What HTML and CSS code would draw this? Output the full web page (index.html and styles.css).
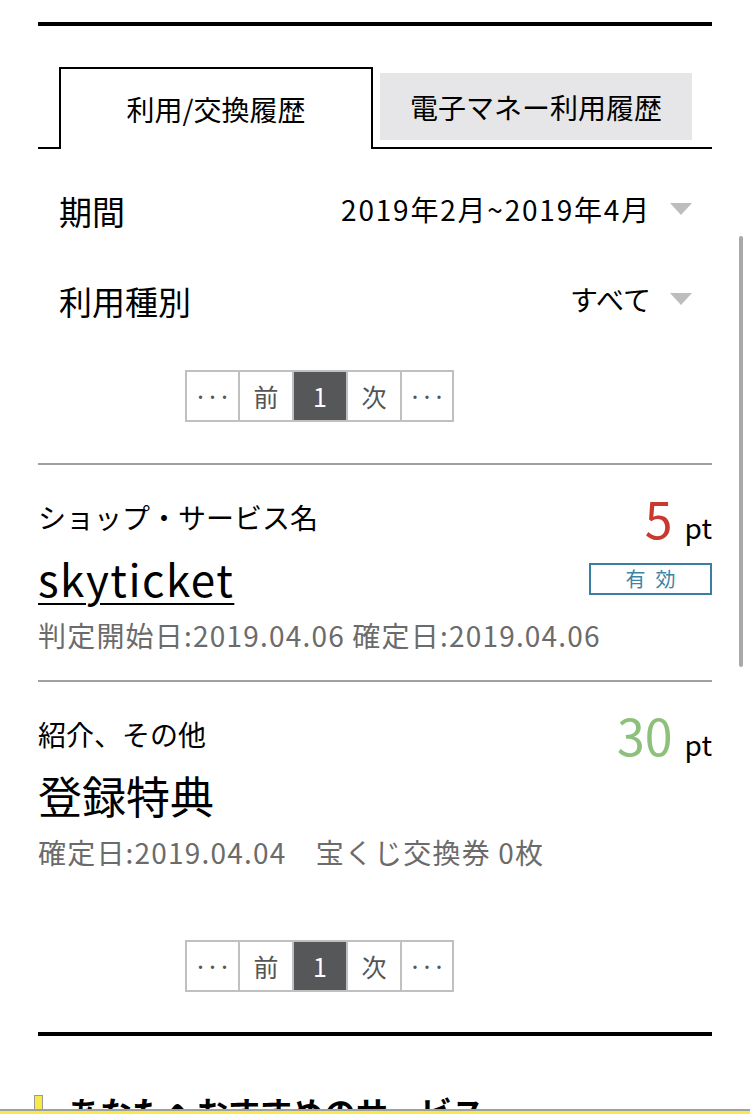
FILE: index.html
```html
<!DOCTYPE html>
<html lang="ja">
<head>
<meta charset="utf-8">
<title>利用/交換履歴</title>
<link rel="stylesheet" href="styles.css">
</head>
<body>
<div class="page">
  <div class="rule rule-top"></div>

  <div class="tabs">
    <div class="tab tab-active">利用/交換履歴</div>
    <div class="tab tab-inactive">電子マネー利用履歴</div>
  </div>

  <div class="filters">
    <div class="filter-row">
      <span class="filter-label">期間</span>
      <span class="filter-value filter-value-range">2019年2月~2019年4月<span class="caret"></span></span>
    </div>
    <div class="filter-row">
      <span class="filter-label">利用種別</span>
      <span class="filter-value">すべて<span class="caret"></span></span>
    </div>
  </div>

  <div class="pager pager-top">
    <span class="pager-cell pager-dots">···</span>
    <span class="pager-cell">前</span>
    <span class="pager-cell pager-current">1</span>
    <span class="pager-cell">次</span>
    <span class="pager-cell pager-dots">···</span>
  </div>

  <div class="history">
    <div class="item">
      <div class="item-head">
        <span class="item-label">ショップ・サービス名</span>
        <span class="points"><span class="points-num points-red">5</span><span class="points-unit">pt</span></span>
      </div>
      <div class="item-title-row">
        <a class="item-title item-link">skyticket</a>
        <span class="badge">有効</span>
      </div>
      <div class="item-date">判定開始日:2019.04.06 確定日:2019.04.06</div>
    </div>
    <div class="item item-last">
      <div class="item-head">
        <span class="item-label">紹介、その他</span>
        <span class="points"><span class="points-num points-green">30</span><span class="points-unit">pt</span></span>
      </div>
      <div class="item-title-row">
        <span class="item-title">登録特典</span>
      </div>
      <div class="item-date">確定日:2019.04.04　宝くじ交換券 0枚</div>
    </div>
  </div>

  <div class="pager pager-bottom">
    <span class="pager-cell pager-dots">···</span>
    <span class="pager-cell">前</span>
    <span class="pager-cell pager-current">1</span>
    <span class="pager-cell">次</span>
    <span class="pager-cell pager-dots">···</span>
  </div>

  <div class="rule rule-bottom"></div>

  <h2 class="section-heading"><span class="section-marker"></span><span>あなたへおすすめのサービス</span></h2>
</div>
<div class="scroll-indicator"></div>
<div class="bottom-bar"></div>
</body>
</html>
```

FILE: styles.css
```css
html {
  overflow: hidden;
}

body {
  margin: 0;
  background: #fff;
  color: #000;
  font-family: "Noto Sans CJK JP", "Noto Sans", sans-serif;
}

.page {
  padding: 0 38px;
}

.rule {
  height: 4px;
  background: #000;
}

.rule-top {
  margin-top: 22px;
}

/* Tabs */
.tabs {
  display: flex;
  align-items: flex-start;
  margin-top: 41px;
  padding: 0 20px 0 21px;
  border-bottom: 2px solid #000;
}

.tab {
  display: flex;
  align-items: center;
  justify-content: center;
  box-sizing: border-box;
  font-size: 28px;
  line-height: 1;
}

.tab-active {
  width: 314px;
  height: 82px;
  margin-bottom: -2px;
  border: 2px solid #000;
  border-bottom: none;
  background: #fff;
}

.tab-inactive {
  width: 312px;
  height: 67px;
  margin: 6px 0 0 7px;
  background: #e6e6e8;
}

/* Filters */
.filters {
  padding: 17px 20px 0 21px;
}

.filter-row {
  display: flex;
  align-items: center;
  justify-content: space-between;
  height: 90px;
}

.filter-label {
  font-size: 33px;
  line-height: 1;
  padding-top: 1px;
}

.filter-value {
  display: flex;
  align-items: center;
  font-size: 28px;
  line-height: 1;
  padding-bottom: 5px;
}

.filter-value-range {
  letter-spacing: 1.8px;
}

.caret {
  width: 0;
  height: 0;
  margin-left: 19px;
  border-left: 11px solid transparent;
  border-right: 11px solid transparent;
  border-top: 12px solid #bdbdbd;
}

/* Pager */
.pager {
  display: flex;
  width: max-content;
  margin-left: 147px;
  border: 2px solid #c0c0c0;
}

.pager-top {
  margin-top: 24px;
}

.pager-bottom {
  margin-top: 43px;
}

.pager-cell {
  display: flex;
  align-items: center;
  justify-content: center;
  box-sizing: border-box;
  width: 54px;
  height: 48px;
  border-right: 2px solid #c0c0c0;
  color: #555;
  font-size: 25px;
  line-height: 1;
}

.pager-cell:first-child {
  width: 53px;
}

.pager-cell:last-child {
  width: 50px;
  border-right: none;
}

.pager-dots {
  font-family: "Noto Sans", "DejaVu Sans", sans-serif;
  font-size: 26px;
  letter-spacing: 5px;
  padding-left: 5px;
}

.pager-current {
  background: #565759;
  color: #fff;
}

/* History */
.history {
  margin-top: 41px;
}

.item {
  border-top: 2px solid #a0a0a0;
  padding: 24px 0 21px;
}

.item-head {
  display: flex;
  align-items: center;
  justify-content: space-between;
  height: 56px;
}

.item-label {
  font-size: 28px;
  line-height: 1;
}

.points {
  display: flex;
  align-items: baseline;
  line-height: 1;
}

.points-num {
  font-size: 50px;
}

.points-red {
  color: #c83a30;
}

.points-green {
  color: #8dc07a;
}

.points-unit {
  margin-left: 12px;
  font-size: 28px;
}

.item-title-row {
  display: flex;
  align-items: center;
  justify-content: space-between;
  height: 66px;
}

.item-title {
  font-size: 44px;
  line-height: 1;
  color: #000;
}

.item-link {
  text-decoration: underline;
  text-decoration-thickness: 2px;
  text-underline-offset: 6px;
  letter-spacing: 1.5px;
}

.badge {
  display: flex;
  align-items: center;
  justify-content: center;
  box-sizing: border-box;
  width: 123px;
  height: 32px;
  margin-top: 2px;
  border: 2px solid #3a7fa0;
  color: #3c83a6;
  font-size: 20px;
  letter-spacing: 10px;
  text-indent: 10px;
  line-height: 1;
}

.item-date {
  display: flex;
  align-items: center;
  height: 48px;
  color: #6b6b6b;
  font-size: 28px;
  letter-spacing: 1.2px;
  line-height: 1;
  white-space: pre;
}

/* Bottom */
.rule-bottom {
  margin-top: 40px;
}

.section-heading {
  display: flex;
  align-items: flex-start;
  gap: 25px;
  margin: 53px 0 0 -4px;
  font-size: 32px;
  font-weight: 700;
  line-height: 44px;
}

.section-marker {
  display: block;
  box-sizing: border-box;
  width: 9px;
  height: 40px;
  margin-top: 6px;
  background: #f7ea48;
  border: 1px solid #9a9a9a;
}

.scroll-indicator {
  position: fixed;
  top: 236px;
  right: 7px;
  width: 4px;
  height: 431px;
  border-radius: 2px;
  background: #a9a9a9;
}

.bottom-bar {
  position: fixed;
  left: 0;
  right: 0;
  bottom: 0;
  height: 3px;
  background: #f7ea48;
  border-top: 2px solid #a0a0a0;
}
```
